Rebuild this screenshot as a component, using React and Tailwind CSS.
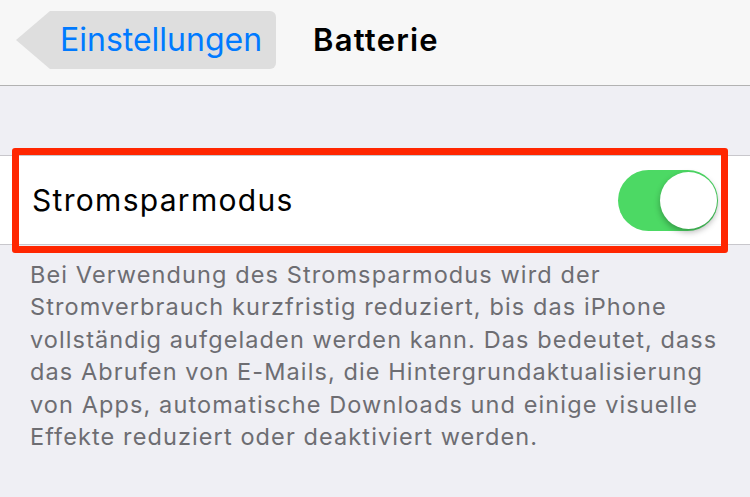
import React from 'react';

const lines = [
  'Bei Verwendung des Stromsparmodus wird der',
  'Stromverbrauch kurzfristig reduziert, bis das iPhone',
  'vollständig aufgeladen werden kann. Das bedeutet, dass',
  'das Abrufen von E-Mails, die Hintergrundaktualisierung',
  'von Apps, automatische Downloads und einige visuelle',
  'Effekte reduziert oder deaktiviert werden.',
];

export default function App() {
  return (
    <div className="w-[750px] h-[497px] overflow-hidden bg-[#efeff4] font-['Inter','Liberation_Sans',sans-serif]">
      {/* nav bar */}
      <div className="h-[86px] bg-[#f7f7f7] border-b border-[#b2b2b2] pt-[11px] pl-[16px] flex items-start">
        <div className="flex items-stretch h-[58px]">
          <svg width="34" height="58" viewBox="0 0 34 58" className="block">
            <polygon points="0,29 34,0 34,58" fill="#dedede" />
          </svg>
          <div className="bg-[#dedede] w-[226px] rounded-r-[6px] pl-[10px] flex items-center text-[32px] text-[#007aff]">
            Einstellungen
          </div>
        </div>
        <div className="ml-[37px] h-[58px] flex items-center text-[31px] font-semibold tracking-[1.2px] text-black">
          Batterie
        </div>
      </div>

      {/* cell */}
      <div className="mt-[69px] relative bg-white border-y border-[#c8c7cc] h-[90px] flex items-center justify-between pl-[32px] pr-[32px]">
        <span className="text-[30px] tracking-[1.3px] text-black">Stromsparmodus</span>
        <div className="w-[100px] h-[61px] rounded-full bg-[#4cd964] flex items-center justify-end pr-[1px]">
          <div className="w-[57px] h-[57px] rounded-full bg-white shadow-[0_3px_6px_rgba(0,0,0,0.3)]" />
        </div>
        <div className="absolute -top-[8px] left-[12px] w-[716px] h-[105px] border-[7px] border-[#ff2600] rounded-[3px]" />
      </div>

      {/* footer text */}
      <div className="pl-[30px] pt-[14px] text-[23.5px] leading-[32.4px] tracking-[1.1px] text-[#6d6d72]">
        {lines.map((l) => (
          <div key={l} className="whitespace-nowrap">{l}</div>
        ))}
      </div>
    </div>
  );
}
